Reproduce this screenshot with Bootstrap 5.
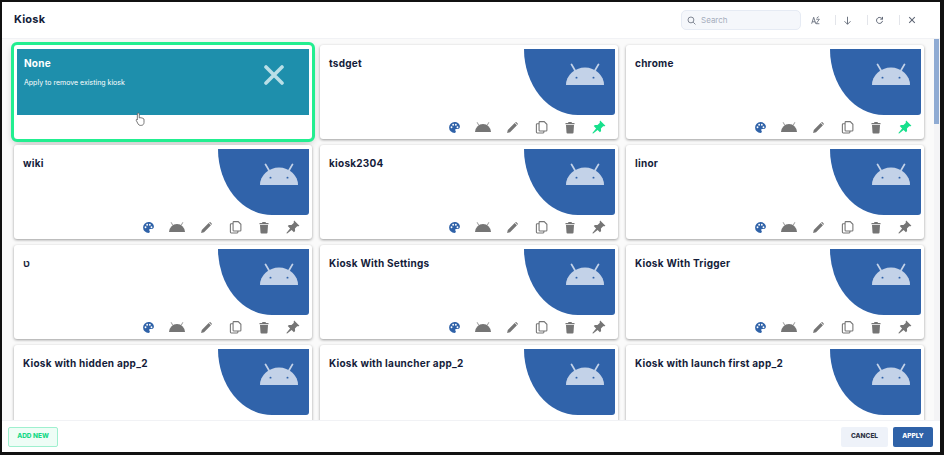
<!DOCTYPE html>
<html>
  <head>
    <title>Kiosk</title>
    <link rel="stylesheet" href="https://cdn.jsdelivr.net/npm/bootstrap@5.3.3/dist/css/bootstrap.min.css" />
    <script src="https://cdn.jsdelivr.net/npm/bootstrap@5.3.3/dist/js/bootstrap.bundle.min.js"></script>
    <style>
      html, body { height: 100%; overflow: hidden; }
      body { background: #fff; font-family: Inter, "Liberation Sans", sans-serif; color: #141c3a; }
      .kiosk-frame { width: 100vw; height: 100vh; border: solid #111; border-width: 2px 4px 3px 2px; background: #fff; }
      .kiosk-head { height: 37px; padding: 0 8px 0 12px; border-bottom: 1px solid #f1f2f5; flex: none; }
      .kiosk-title { font-size: 11px; font-weight: 700; letter-spacing: .2px; margin: 0; }
      .kiosk-search { width: 120px; height: 20px; background: #f5f7fb; border: 1px solid #e6ebf4; border-radius: 5px; padding-left: 5px; color: #a5adbd; font-size: 8px; gap: 5px; margin-right: 3px; }
      .head-btn { width: 32px; height: 10px; padding-right: 8px; color: #5f6675; border-right: 1px solid #e3e5ea; }
      .head-btn:last-child { border-right: 0; }
      .kiosk-body { flex: 1; min-height: 0; overflow: hidden; position: relative; padding: 6px 16px 0 12px; background: #fafafa; }
      .kiosk-grid { display: grid; grid-template-columns: repeat(3, 1fr); gap: 6px 8px; }
      .kiosk-card { height: 94px; background: #fff; border-radius: 3px; box-shadow: 0 1px 3px rgba(0,0,0,.38); padding: 4px 3px; position: relative; }
      .kiosk-card.is-active { outline: 3px solid #22ee90; outline-offset: 0; box-shadow: 0 3px 8px rgba(0,0,0,.32); }
      .card-name { font-size: 10px; font-weight: 700; letter-spacing: .25px; line-height: 15px; padding: 7px 6px; color: #141c3a; }
      .blue-shape { position: absolute; top: 4px; right: 3px; width: 91px; height: 66px; background: #3063aa; border-radius: 0 0 3px 0; border-bottom-left-radius: 54px 66px; }
      .blue-shape svg { position: absolute; top: 14px; right: 11px; }
      .none-fill { height: 66px; background: #1e8fac; color: #fff; position: relative; padding: 7px; }
      .none-fill .card-name { color: #fff; padding: 0; }
      .none-sub { font-size: 7px; margin-top: 7px; }
      .none-x { position: absolute; left: 247px; top: 16px; }
      .card-actions { position: absolute; right: 10px; bottom: 3px; gap: 11px; }
      .act { width: 18px; height: 18px; display: flex; align-items: center; justify-content: center; }
      .hand-cursor { position: absolute; left: 121px; top: 67px; }
      .kiosk-foot { height: 32px; padding: 0 7px 0 6px; border-top: 1px solid #f1f2f5; flex: none; background: #fff; }
      .btn-addnew { width: 50px; height: 20px; padding: 0; font-size: 6.5px; font-weight: 800; color: #17d987; background: #eefdf6; border: 1px solid #9ff0cf; border-radius: 2px; }
      .btn-cancel { width: 47px; height: 20px; padding: 0; font-size: 6.5px; font-weight: 800; color: #2d3345; background: #eef2f9; border: 0; border-radius: 2px; margin-right: 5px; }
      .btn-apply { width: 40px; height: 20px; padding: 0; font-size: 6.5px; font-weight: 800; color: #fff; background: #2f62a8; border: 0; border-radius: 2px; }
      .scroll-track { position: absolute; right: 0; top: 0; bottom: 0; width: 6px; background: #f4f4f6; }
      .scroll-thumb { height: 85px; margin-right: 1px; background: #8fabd3; }
    </style>
  </head>

  <body>
    <div class="kiosk-frame d-flex flex-column">
      <div class="kiosk-head d-flex align-items-center">
        <h1 class="kiosk-title me-auto">Kiosk</h1>
        <div class="kiosk-search d-flex align-items-center">
          <svg width="9" height="9" viewBox="0 0 16 16" fill="none" stroke="#6b7280" stroke-width="1.5"><circle cx="7" cy="7" r="5.2"/><path d="M11 11l4 4"/></svg>
          <span>Search</span>
        </div>
        <div class="head-btn d-flex align-items-center justify-content-center">
          <svg width="9" height="9" viewBox="0 0 14 14" fill="none" stroke="currentColor" stroke-width="1.3"><path d="M1 12L4.2 2l3.2 10M2 9h4.4M8 5h5l-5 7h5M9 3l3-2"/></svg>
        </div>
        <div class="head-btn d-flex align-items-center justify-content-center">
          <svg width="9" height="9" viewBox="0 0 12 12" fill="none" stroke="currentColor" stroke-width="1.2"><path d="M6 1v10M2 7l4 4 4-4"/></svg>
        </div>
        <div class="head-btn d-flex align-items-center justify-content-center">
          <svg width="9" height="9" viewBox="0 0 12 12" fill="none" stroke="currentColor" stroke-width="1.3"><path d="M10 6.5A4 4 0 1 1 8.8 3L10 4.2M10 1.2v3H7"/></svg>
        </div>
        <div class="head-btn d-flex align-items-center justify-content-center">
          <svg width="8" height="8" viewBox="0 0 10 10" fill="none" stroke="currentColor" stroke-width="1.3"><path d="M1.5 1.5l7 7M8.5 1.5l-7 7"/></svg>
        </div>
      </div>

      <div class="kiosk-body">
        <div class="kiosk-grid" id="kioskGrid"></div>
        <div class="scroll-track"><div class="scroll-thumb"></div></div>
      </div>

      <div class="kiosk-foot d-flex align-items-center">
        <button type="button" class="btn btn-addnew me-auto">ADD NEW</button>
        <button type="button" class="btn btn-cancel">CANCEL</button>
        <button type="button" class="btn btn-apply">APPLY</button>
      </div>
    </div>

    <script>
      // dome with two antennae, eyes only on the big one
      const androidHead = (w, h, color, eyes) => `<svg width="${w}" height="${h}" viewBox="0 0 38 24" preserveAspectRatio="none"><path fill="${color}" d="M0 24a19 19 0 0 1 38 0z"/><path fill="none" stroke="${color}" stroke-width="1.8" stroke-linecap="round" d="M9 8L5.5 1.5M29 8l3.500-6.500"/>${eyes ? '<circle cx="10.500" cy="16" r="1" fill="#3063aa"/><circle cx="27.500" cy="16" r="1" fill="#3063aa"/>' : ""}</svg>`;

      const icons = {
        palette: `<svg width="13" height="13" viewBox="0 0 24 24"><path fill="#2f62a8" d="M12 2a10 10 0 0 0 0 20c1.5 0 2.5-1 2.5-2.400 0-.7-.3-1.200-.6-1.700-.3-.4-.6-.9-.6-1.400 0-1 .9-1.700 1.900-1.700H18c2.300 0 4-1.700 4-4C22 5.700 17.500 2 12 2z"/><g fill="#fff"><circle cx="6.500" cy="11.500" r="1.700"/><circle cx="9.500" cy="7" r="1.700"/><circle cx="14.500" cy="7" r="1.700"/><circle cx="17.500" cy="11.500" r="1.700"/></g></svg>`,
        android: androidHead(16, 10, "#757575", false),
        pencil: `<svg width="13" height="13" viewBox="0 0 24 24"><path fill="#757575" d="M2 22l1.300-5.500L16 3.800l4.200 4.200L7.500 20.700zM17.300 2.500a1.500 1.500 0 0 1 2.100 0l2.100 2.100a1.500 1.500 0 0 1 0 2.100l-.4.400-4.200-4.200z"/></svg>`,
        copy: `<svg width="13" height="14" viewBox="0 0 24 26" fill="none" stroke="#757575" stroke-width="2"><path d="M9 3h8l5 5v11a1.500 1.500 0 0 1-1.500 1.500H9A1.500 1.500 0 0 1 7.500 19V4.500A1.500 1.500 0 0 1 9 3z"/><path d="M7.500 7H4a1.500 1.500 0 0 0-1.500 1.500v14A1.500 1.500 0 0 0 4 24h11a1.500 1.500 0 0 0 1.500-1.500V20.500"/></svg>`,
        trash: `<svg width="10" height="13" viewBox="0 0 20 24"><path fill="#757575" d="M2 7h16l-1 15a2 2 0 0 1-2 2H5a2 2 0 0 1-2-2zM1 3h5l1-2h6l1 2h5v2.500H1z"/></svg>`,
        pin: (c) => `<svg width="14" height="14" viewBox="0 0 24 24"><path fill="${c}" d="M14 1l9 9-2.500 1-1-.6-4.200 4.200.3 4.400-2 2-4-4L2 23l-1 0 0-1 6-7.600-4-4 2-2 4.400.3 4.200-4.200-.6-1z"/></svg>`,
      };

      const kiosks = [
        { name: "None", none: true },
        { name: "tsdget", pin: "#17e08c" },
        { name: "chrome", pin: "#17e08c" },
        { name: "wiki" },
        { name: "kiosk2304" },
        { name: "linor" },
        { name: "ט" },
        { name: "Kiosk With Settings" },
        { name: "Kiosk With Trigger" },
        { name: "Kiosk with hidden app_2" },
        { name: "Kiosk with launcher app_2" },
        { name: "Kiosk with launch first app_2" },
      ];

      const kioskGrid = document.querySelector("#kioskGrid");

      for (let i = 0; i < kiosks.length; i++) {
        const item = document.createElement("div");
        if (kiosks[i].none) {
          item.className = "kiosk-card is-active";
          item.innerHTML = `<div class="none-fill">
              <div class="card-name">None</div>
              <div class="none-sub">Apply to remove existing kiosk</div>
              <svg class="none-x" width="20" height="20" viewBox="0 0 20 20" stroke="#b9dfe7" stroke-width="3.6" stroke-linecap="round"><path d="M2 2l16 16M18 2L2 18"/></svg>
            </div>
            <svg class="hand-cursor" width="11" height="14" viewBox="0 0 12 16"><path fill="#fff" stroke="#555" stroke-width=".9" d="M3.500 1.200c.7 0 1.100.5 1.100 1.100v4.500l.9-.4 1 .3 1 .1 1.100.4 1.400.9V12c0 1.800-1.200 3.300-3.200 3.300H5.700c-1.100 0-1.800-.6-2.400-1.500L1.100 9.500c-.3-.7.500-1.200 1-.7l.3.300V2.300c0-.6.500-1.100 1.100-1.100z"/></svg>`;
        } else {
          item.className = "kiosk-card";
          item.innerHTML = `<div class="card-name">${kiosks[i].name}</div>
            <div class="blue-shape">${androidHead(38, 22, "#c3d2e8", true)}</div>
            <div class="card-actions d-flex">
              <span class="act">${icons.palette}</span>
              <span class="act">${icons.android}</span>
              <span class="act">${icons.pencil}</span>
              <span class="act">${icons.copy}</span>
              <span class="act">${icons.trash}</span>
              <span class="act">${icons.pin(kiosks[i].pin || "#757575")}</span>
            </div>`;
        }
        kioskGrid.appendChild(item);
      }
    </script>
  </body>
</html>
